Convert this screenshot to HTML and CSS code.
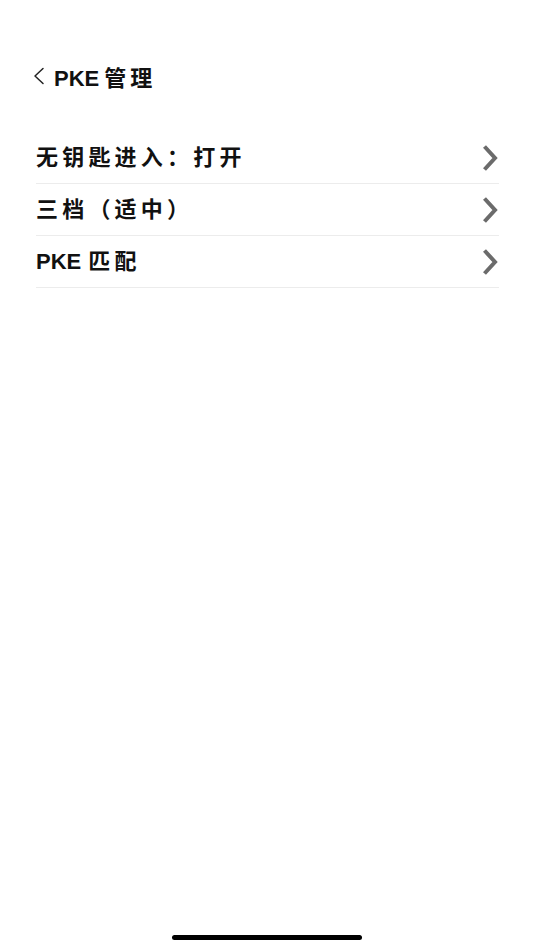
FILE: index.html
```html
<!DOCTYPE html>
<html lang="zh">
<head>
    <meta charset="UTF-8">
    <meta name="viewport" content="width=device-width, initial-scale=1.0">
    <title>PKE 管理</title>
    <link rel="stylesheet" href="styles.css">
</head>
<body>
    <div class="page">
        <div class="nav">
            <svg class="back" width="13" height="18" viewBox="0 0 13 18">
                <path d="M11 1.5 L3 9 L11 16.5" fill="none" stroke="#222" stroke-width="1.5" stroke-linecap="round" stroke-linejoin="round"/>
            </svg>
            <span class="nav-title"><span class="latin tight">PKE</span>管理</span>
        </div>
        <ul class="menu">
            <li class="menu-item">
                <span class="label">无钥匙进入：打开</span>
                <svg class="arrow" width="20" height="28" viewBox="0 0 20 28">
                    <path d="M4.5 2.5 L15 14 L4.5 25.5" fill="none" stroke="#6b6b6b" stroke-width="4"/>
                </svg>
            </li>
            <li class="menu-item">
                <span class="label">三档（适中）</span>
                <svg class="arrow" width="20" height="28" viewBox="0 0 20 28">
                    <path d="M4.5 2.5 L15 14 L4.5 25.5" fill="none" stroke="#6b6b6b" stroke-width="4"/>
                </svg>
            </li>
            <li class="menu-item">
                <span class="label"><span class="latin">PKE</span>匹配</span>
                <svg class="arrow" width="20" height="28" viewBox="0 0 20 28">
                    <path d="M4.5 2.5 L15 14 L4.5 25.5" fill="none" stroke="#6b6b6b" stroke-width="4"/>
                </svg>
            </li>
        </ul>
    </div>
    <div class="home-bar"></div>
</body>
</html>
```

FILE: styles.css
```css
:root {
    --text-color: #111;
    --line-color: #ececec;
}
html, body {
    height: 100%;
}
body {
    margin: 0;
    background: #fff;
    color: var(--text-color);
    font-family: "Liberation Sans", "Noto Sans CJK SC", sans-serif;
    display: flex;
    flex-direction: column;
}
.page {
    flex: 1;
    padding: 0 35px 0 36px;
}
.nav {
    display: flex;
    align-items: center;
    gap: 9px;
    height: 28px;
    margin-top: 62px;
    margin-left: -4px;
}
.nav-title {
    font-size: 22px;
    font-weight: bold;
    letter-spacing: 4px;
}
.latin {
    letter-spacing: 0;
    margin-right: 7px;
}
.latin.tight {
    margin-right: 5px;
}
.menu {
    list-style: none;
    margin: 42px 0 0;
    padding: 0;
}
.menu-item {
    display: flex;
    justify-content: space-between;
    align-items: center;
    height: 51px;
    border-bottom: 1px solid var(--line-color);
    font-size: 22px;
    font-weight: bold;
    letter-spacing: 4.2px;
}
.label {
    padding-bottom: 5px;
}
.arrow {
    margin-right: -1px;
}
.home-bar {
    width: 190px;
    height: 5px;
    border-radius: 3px;
    background: #000;
    margin: 0 auto 10px;
}
```
